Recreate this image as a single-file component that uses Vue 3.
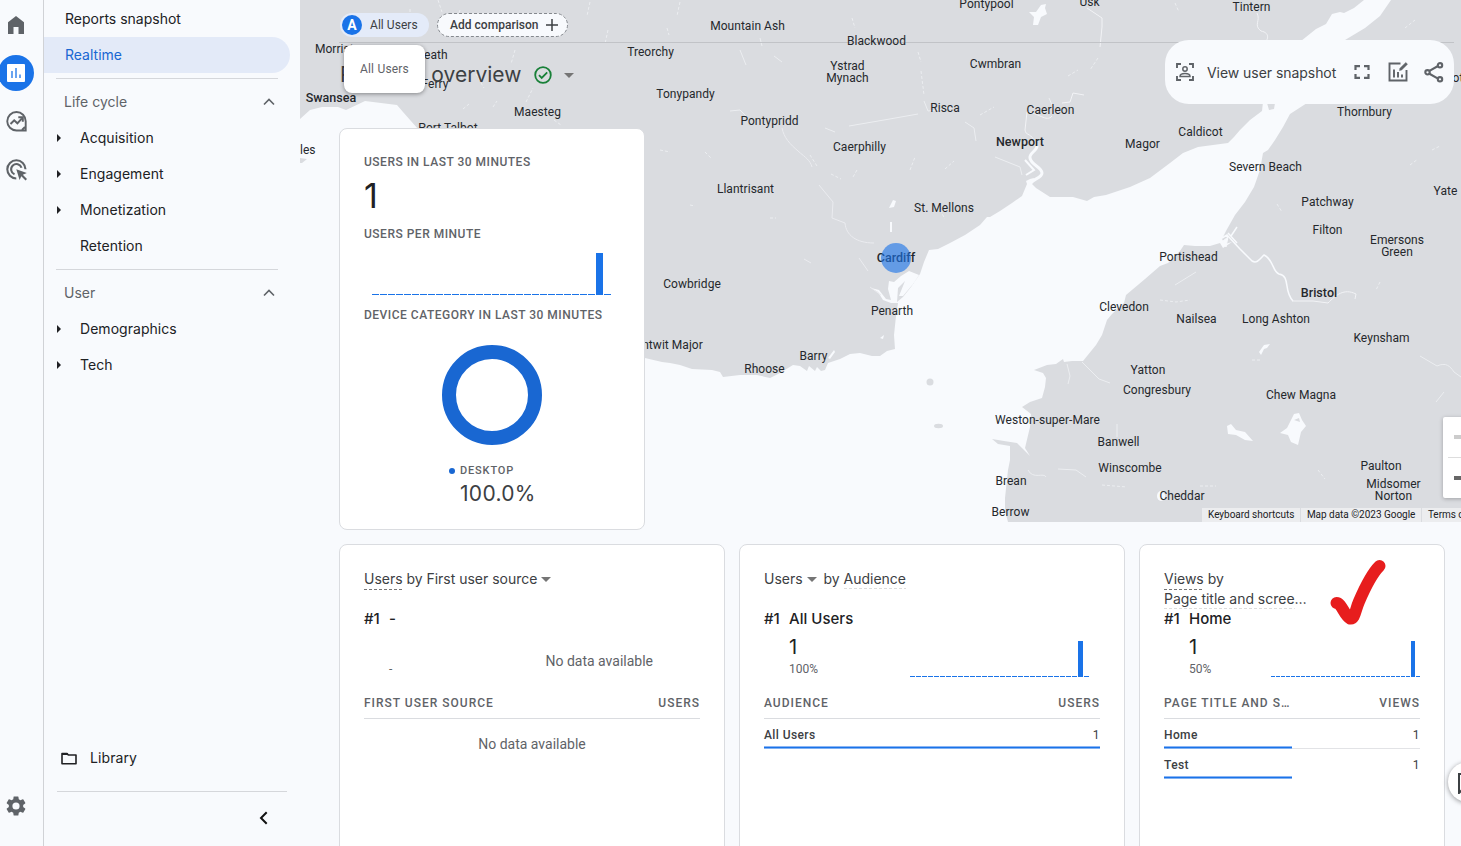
<script setup>
const labels = [
  ['Pontypool', 986, 8], ['Usk', 1089, 6], ['Tintern', 1251, 11], ['Mountain Ash', 747, 30], ['Treorchy', 650, 56],
  ['Blackwood', 876, 45], ['Ystrad', 847, 70], ['Mynach', 847, 82], ['Cwmbran', 995, 68], ['Tonypandy', 685, 98],
  ['Risca', 944.5, 112], ['Caerleon', 1050, 114], ['Pontypridd', 769, 125], ['Caerphilly', 859, 151], ['Maesteg', 537, 116],
  ['Port Talbot', 447.5, 132], ['Llantrisant', 745, 193], ['St. Mellons', 943.5, 212], ['Magor', 1142, 148],
  ['Caldicot', 1200, 136], ['Severn Beach', 1265, 171], ['Thornbury', 1364, 116], ['Yate', 1445, 195], ['Patchway', 1327, 206],
  ['Filton', 1327, 234], ['Emersons', 1396.5, 244], ['Green', 1396.5, 256], ['Portishead', 1188, 261], ['Clevedon', 1123.5, 311],
  ['Nailsea', 1196, 323], ['Long Ashton', 1275.5, 323], ['Keynsham', 1381, 342], ['Yatton', 1147.5, 374],
  ['Congresbury', 1156.5, 394], ['Chew Magna', 1300.5, 399], ['Weston-super-Mare', 1047, 424], ['Banwell', 1118, 446],
  ['Winscombe', 1129.5, 472], ['Cheddar', 1181.5, 500], ['Brean', 1010.5, 485], ['Berrow', 1010, 516], ['Paulton', 1380.5, 470],
  ['Midsomer', 1393, 488], ['Norton', 1393, 500], ['Cowbridge', 691.5, 288], ['Penarth', 891.5, 315], ['Barry', 813, 360],
  ['Rhoose', 764, 373], ['Llantwit Major', 664, 349], ['Morriston', 340.5, 53], ['Neath', 431, 59], ['Briton Ferry', 417, 88],
  ['Mumbles', 290, 154], ['Wotton', 1461, 82]
]
const cities = [['Swansea', 331, 101.5], ['Newport', 1020, 145.5], ['Cardiff', 896, 262], ['Bristol', 1319, 297]]
const ticks = Array.from({ length: 30 }, (_, i) => i)
const lifecycle = ['Acquisition', 'Engagement', 'Monetization', 'Retention']
const user = ['Demographics', 'Tech']
</script>

<template>
  <div class="app">
    <nav class="rail">
      <svg class="home" width="16" height="18" viewBox="0 0 16 18"><path d="M0 6.2 8 0l8 6.2V18h-5.5v-7h-5v7H0z" /></svg>
      <div class="active">
        <svg width="18" height="18" viewBox="0 0 18 18"><rect width="18" height="18" rx="1" fill="#fff" /><path d="M5 7v7M9 4v10M13 10.500v3.500" stroke="#1a73e8" stroke-width="1.300" /></svg>
      </div>
      <svg class="explore" width="21" height="21" viewBox="0 0 21 21" fill="none" stroke="#5f6368" stroke-width="1.900"><path d="M10.500 1a9.200 9.200 0 1 0 0 18.500H19.700V10.300A9.200 9.200 0 0 0 10.500 1z" /><path d="m4.500 13 3.700-3.700 3.200 3 4.500-5" stroke-width="2" /><path d="M12.300 6.300h4.500v4.500M16 19l3-3" stroke-width="2" /></svg>
      <svg class="ads" width="22" height="22" viewBox="0 0 22 22" fill="none" stroke="#5f6368" stroke-width="2.100"><path d="M10.300 19.500a9.100 9.100 0 1 1 9.200-9.200M8.500 15.300a5.300 5.300 0 1 1 7-6.500" /><path d="m10.300 10.300 10.500 3.800-4 1.700 4.200 4.200-1.500 1.500-4.200-4.200-1.700 3.700z" fill="#5f6368" stroke="none" /></svg>
      <svg class="gear" width="24" height="24" viewBox="0 0 24 24"><path d="M19.140 12.940c.040-.3.060-.610.060-.940s-.020-.640-.070-.940l2.030-1.580a.49.490 0 0 0 .120-.610l-1.920-3.320a.488.488 0 0 0-.590-.220l-2.390.960c-.5-.380-1.030-.7-1.620-.940l-.360-2.540a.484.484 0 0 0-.480-.410h-3.840c-.240 0-.430.170-.470.410l-.360 2.540c-.590.240-1.130.570-1.620.940l-2.390-.960c-.220-.080-.470 0-.590.220L2.740 8.870c-.120.210-.080.470.120.610l2.030 1.580c-.050.3-.090.630-.090.940s.020.640.070.940l-2.030 1.580a.49.490 0 0 0-.120.610l1.920 3.320c.120.220.370.290.590.220l2.390-.960c.5.380 1.030.7 1.620.940l.360 2.540c.050.240.240.410.480.410h3.840c.240 0 .440-.170.470-.410l.360-2.540c.590-.240 1.130-.560 1.620-.940l2.390.960c.220.080.470 0 .590-.220l1.920-3.320a.49.490 0 0 0-.120-.610zM12 15.600a3.600 3.600 0 1 1 0-7.200 3.600 3.600 0 0 1 0 7.200z" /></svg>
    </nav>

    <aside class="side">
      <a class="top-link">Reports snapshot</a>
      <a class="top-link selected">Realtime</a>
      <hr>
      <div class="group first"><span>Life cycle</span><svg width="12" height="8" viewBox="0 0 12 8"><path d="m1 6.500 5-5 5 5" fill="none" stroke="#5f6368" stroke-width="1.600" /></svg></div>
      <a v-for="item in lifecycle" :key="item" class="item"><i v-if="item !== 'Retention'" /><span>{{ item }}</span></a>
      <hr>
      <div class="group"><span>User</span><svg width="12" height="8" viewBox="0 0 12 8"><path d="m1 6.500 5-5 5 5" fill="none" stroke="#5f6368" stroke-width="1.600" /></svg></div>
      <a v-for="item in user" :key="item" class="item"><i /><span>{{ item }}</span></a>
      <div class="bottom">
        <a class="library"><svg width="16" height="13" viewBox="0 0 16 13"><path d="M1 11V1.500h5l1.300 1.500H15v8.800H1z" fill="none" stroke="#202124" stroke-width="1.600" stroke-linejoin="round" /><path d="M1 1h5.300l1.200 2H1z" fill="#202124" /></svg><span>Library</span></a>
        <div class="collapse"><svg width="9" height="14" viewBox="0 0 9 14"><path d="M7.700 1.200 2 7l5.700 5.800" fill="none" stroke="#111" stroke-width="2" /></svg></div>
      </div>
    </aside>

    <main>
      <svg class="map" width="1161" height="522" viewBox="300 0 1161 522">
        <rect x="300" width="1161" height="522" fill="#dadce0" />
        <path fill="#f8fafd" d="M300 119 310 110 322 107 338 107 346 110 365 101 397 105 403 112 418 129 500 280 645 358 662 362 670 363 680 365 692 369 712 370 720 372 723 377 740 375 757 375 770 378 780 373 793 365 800 366 807 371 809 366 815 371 817 367 821 371 825 370 828 363 840 359 850 354 860 353 872 356 880 356 887 351 895 349 894 335 896 316 898 303 891 303 883 300 878 292 871 288 879 290 886 299 891 300 888 289 889 281 894 282 901 276 909 271 919 275 913 284 903 296 899 296 905 281 898 288 897 302 903 297 911 287 920 274 924 262 929 250 938 249 950 243 965 235 980 225 987 217 990 217 1000 211 1012 203 1022 196 1027 184 1026 181 1030 179 1034 178 1032 184 1036 188 1050 197 1073 197 1087 201 1094 197 1106 195 1130 187 1150 178 1170 163 1183 153 1198 147 1228 143 1234 137 1240 130 1250 120 1262 111 1263 102 1301 41 1316 29 1326 24 1332 14 1340 12 1344 13 1354 8 1364 0 1391 0 1380 16 1365 28 1345 40 1307 103 1290 114 1283 127 1275 140 1268 150 1263 153 1260 170 1254 187 1245 202 1235 215 1226 231 1222 239 1225 244 1232 242 1223 248 1220 243 1210 246 1195 246 1184 245 1180 251 1168 263 1160 266 1145 279 1126 295 1124 303 1112 314 1107 320 1105 326 1102 335 1096 345 1083 361 1072 361 1064 362 1063 359 1056 364 1047 365 1034 370 1043 373 1046 378 1045 387 1042 398 1030 402 1022 407 1031 414 1030 427 1025 448 1030 456 1022 448 1017 443 1004 441 992 439 998 444 1010 446 1010 460 1008 470 1005 498 1005 511 1008 522 300 522z" />
        <g fill="#f8fafd"><path d="m1029 12 7 0 5-7 5-1-1 4 2 6-6 3-3 8h-5l1-8z" /><path d="m1294 414 5-1 3 7 4 6-5 6-3 13-7-3-3-7-8-2 7-5z" /><path d="m1227 426 4-2 5 6 9 2 8 9-8-1-9-5-8-1z" /><path d="m1259 352 5-7 6-1-3 4-3 1-3 6z" /><path d="m889 208 4-8 3 1-2 6zM890 222h2v10h-2zM880 338l4-3-1 4zM828 358l6-8 1 2-5 7z" /><ellipse cx="1161" cy="496" rx="4" ry="5" /></g>
        <g fill="#dadce0"><ellipse cx="930" cy="382" rx="3.500" ry="3.500" /><ellipse cx="938.500" cy="426" rx="4.500" ry="2.200" /><path d="m300 158 7 1-5 4h-2zM1267 103l8 0-1 6-5 1zM1294 420l5-2 1 4z" /></g>
        <g fill="none" stroke="#f8fafd"><path d="M1037 146c0 5-8 7-7 12 1 7 12 9 12 15 0 5-9 6-11 10" stroke-width="3" /><path d="m1025 160 9 10-8 5" stroke-width="2" /><path d="m1222 238 5-3 13 14 12 12c5 3 8-2 12-6 10 5 8 16 15 19 12 2 4 17 14 27" stroke-width="1.500" /><path d="m1231 236 6-9M1228 233l9 10" stroke-width="1.500" /><path d="m1223 241 5-4-2 10z" fill="#f8fafd" /></g>
        <g fill="none" stroke="#f2f3f6" stroke-width="1"><path d="M1036 145l-2-5c-5-8-8-4-9-10l2-18c10 0 20 11 25 4M1062 103l8-1 3-9 11 2M1087 8l15 10v9l-2 20" /><path d="M1257 13c4 8-4 12 4 18 10 2 7 10 2 13M1292 301l21 0 15 2c8-8 16-15 28-9l-1 5" /><path d="M782 128c2 10 8 16 16 23 8 7 12 9 14 16M819 185l14 17-1 16 13 5c1 12 11 20 29 20M859 258l9 13M804 259l7 4M870 287l11 8" stroke="#ebecf0" /></g>
        <g fill="none" stroke="#eceef1" stroke-width="1"><path d="m1082 362 17 17 11 4M1067 364l3 12-2 8M1117 424v13M1058 469l18 1 10 7M1028 470c5 10 16 2 18 7M1420 356l17 10c9-4 13 0 17 6l7 5M1436 402l8-10M1175 285l21-13M995 157l25 10 2 8M924 101l4 10 24-3M730 111l10-1 6 6M825 128l10 4M965 122l9 6 2 13M849 126l35-6 34-6M760 38l2 8M740 50l6 15M774 56l8 6M1049 98l3 7" /><path d="M410 9v20M438 0l4 12M460 10l-4 12M474 25l3 10M515 50l-4 14M476 74l8 14M526 102l7-14M554 120l7 5M463 109l6-5M493 107l4-6M590 2l-3 14M608 30l-3 14M680 2l-3 14M667 28l2 7M852 18l3 10M918 52l3 10M921 71l3 24M1098 58l-8 12M1068 76l10-6M1175 3l4 9M1405 28l10-8M1432 150l8-4M1380 282l-4 8M1252 360l8 0M1200 486h16M1102 485l25 2M1160 300l16 2 14-2M1410 165l8-6M1318 470l7 9M940 210l5 9M910 170l5-13M945 169l9-8M980 115l14-8M660 150l10 2M705 152l6 6M810 155l7 11M831 174l10 5M857 170l-4 7M690 205l5 1M770 218h6M1277 204l5 8" stroke-dasharray="3 2" /></g>
        <path d="M339 42.500H1454" stroke="#c1c3c7" />
        <g class="towns" transform="translate(.5 0)"><text v-for="l in labels" :key="l[0]" :x="l[1]" :y="l[2]">{{ l[0] }}</text></g>
        <g class="cities"><text v-for="l in cities" :key="l[0]" :x="l[1]" :y="l[2]">{{ l[0] }}</text></g>
        <circle cx="896" cy="258" r="15" fill="#1a73e8" fill-opacity=".62" />
      </svg>

      <div class="attribution"><span>Keyboard shortcuts</span><span>Map data ©2023 Google</span><span>Terms of Use</span></div>
      <div class="zoom"><b /><hr><b class="dark" /></div>

      <div class="chips">
        <div class="chip"><b>A</b><span>All Users</span></div>
        <div class="chip add"><svg class="outline" width="131" height="24"><rect x=".5" y=".5" width="130" height="23" rx="11.500" fill="#f8fafd" stroke="#85898e" stroke-dasharray="3 2" /></svg><span>Add comparison</span><svg width="12" height="12" viewBox="0 0 12 12"><path d="M6 0v12M0 6h12" stroke="#3c4043" stroke-width="1.500" /></svg></div>
      </div>

      <header>
        <h1><span>Realtime</span> overview</h1>
        <svg width="18" height="18" viewBox="0 0 18 18" fill="none" stroke="#188038" stroke-width="1.800"><circle cx="9" cy="9" r="7.800" /><path d="m5 9.200 2.700 2.700 5.500-5.500" /></svg>
        <i class="caret" />
      </header>
      <div class="tooltip">All Users</div>

      <div class="actions">
        <svg width="18" height="18" viewBox="0 0 18 18" fill="none" stroke="#5f6368" stroke-width="1.900"><path d="M1 5V1h4M13 1h4v4M17 13v4h-4M5 17H1v-4" /><circle cx="9" cy="6" r="2.200" stroke-width="1.500" /><path d="M4 13.500c0-4 10-4 10 0z" stroke-width="1.500" /></svg>
        <span>View user snapshot</span>
        <svg class="full" width="16" height="14" viewBox="0 0 16 14" fill="none" stroke="#5f6368" stroke-width="2.200"><path d="M1.500 5V1.200H6M10 1.200h4.500V5M14.500 9v3.800H10M6 12.800H1.500V9" /></svg>
        <svg class="edit" width="21" height="21" viewBox="0 0 21 21" fill="none" stroke="#5f6368" stroke-width="1.900"><path d="M12.500 2.500H1.500v17h17V9M6 8.500v8M10 11v5.500M14 13.500v3" /><path d="m11.500 9.500.5-2.300 5.800-5.700 1.700 1.700-5.800 5.700z" fill="#5f6368" stroke-width=".5" /></svg>
        <svg width="20" height="21" viewBox="0 0 20 21" fill="none" stroke="#5f6368" stroke-width="2.100"><path d="M5 9.200 14 4M5 11.500l9 5.200" /><circle cx="3.500" cy="10.300" r="2.200" /><circle cx="16" cy="3.300" r="2.200" /><circle cx="16" cy="17.300" r="2.200" /></svg>
      </div>

      <section class="card overview">
        <h2>USERS IN LAST 30 MINUTES</h2>
        <strong>1</strong>
        <h2 class="per">USERS PER MINUTE</h2>
        <div class="bars large"><i v-for="n in ticks" :key="n" :class="{ peak: n === 28 }" /></div>
        <h2>DEVICE CATEGORY IN LAST 30 MINUTES</h2>
        <div class="donut" />
        <div class="device"><i /><span>DESKTOP</span></div>
        <div class="percent">100.0%</div>
      </section>

      <div class="cards">
        <section class="card">
          <h3><span class="under">Users</span>&nbsp;by First user source<i class="caret" /></h3>
          <h4><span>#1</span>-</h4>
          <div class="metric empty"><small>-</small><span>No data available</span></div>
          <div class="table-head"><span>FIRST USER SOURCE</span><span>USERS</span></div>
          <p>No data available</p>
        </section>
        <section class="card">
          <h3>Users<i class="caret mid" />by&nbsp;<span class="under light">Audience</span></h3>
          <h4><span>#1</span>All Users</h4>
          <div class="metric"><div><b>1</b><small>100%</small></div><div class="bars audience"><i v-for="n in ticks" :key="n" :class="{ peak: n === 28 }" /></div></div>
          <div class="table-head"><span>AUDIENCE</span><span>USERS</span></div>
          <div class="row full-row"><span>All Users</span><em>1</em></div>
        </section>
        <section class="card narrow">
          <h3 class="two"><span><span class="under">Views</span> by</span><span><span class="under light">Page title and scree</span>…</span></h3>
          <h4><span>#1</span>Home</h4>
          <div class="metric"><div><b>1</b><small>50%</small></div><div class="bars views"><i v-for="n in ticks" :key="n" :class="{ peak: n === 28 }" /></div></div>
          <div class="table-head"><span>PAGE TITLE AND S…</span><span>VIEWS</span></div>
          <div class="row ruled"><span>Home</span><em>1</em></div>
          <div class="row"><span>Test</span><em>1</em></div>
          <svg class="check" width="60" height="70" viewBox="0 0 60 70"><path d="M7.500 44c5 0 8 13 13.500 15.500 5 1 5-8 9-17 6-14 12-27 20.500-35.500" fill="none" stroke="#e71d1d" stroke-width="12" stroke-linecap="round" stroke-linejoin="round" /></svg>
        </section>
      </div>
      <div class="feedback"><svg width="20" height="22" viewBox="0 0 20 22"><path d="M2 21V2h18v15H6z" fill="none" stroke="#3c4043" stroke-width="2" /></svg></div>
    </main>
  </div>
</template>

<style>
html, body { margin: 0; overflow: hidden; }
</style>

<style scoped>
* { box-sizing: border-box; }
.app { display: flex; width: 1461px; height: 846px; overflow: hidden; background: #f8fafd; color: #202124; font-family: Roboto, "Liberation Sans", sans-serif; }
.app svg { display: block; flex: none; }
.rail { width: 44px; flex: none; border-right: 1px solid #d0d2d6; display: flex; flex-direction: column; fill: #5f6368; }
.home { margin: 16px 0 0 8px; }
.active { width: 36px; height: 36px; margin: 21px 0 0 -2px; background: #1a73e8; border-radius: 50%; display: flex; align-items: center; justify-content: center; }
.explore { margin: 20px 0 0 6px; }
.ads { margin: 27px 0 0 6px; }
.gear { margin: auto 0 28px 4px; }
.side { width: 256px; flex: none; display: flex; flex-direction: column; font: 400 14px/36px Inter, sans-serif; padding-top: 1px; }
.top-link { height: 36px; padding-left: 21px; }
.selected { width: 246px; background: #e3eaf8; color: #1967d2; border-radius: 0 18px 18px 0; }
.side hr { width: 222px; height: 1px; border: 0; background: #d5d7db; margin: 5px 0 5px 12px; }
.group { height: 36px; display: flex; align-items: center; justify-content: space-between; padding: 0 25px 0 20px; color: #5f6368; }
.item { height: 36px; display: flex; align-items: center; letter-spacing: .04px; }
.item i { width: 0; height: 0; border: 4px solid transparent; border-left: 4px solid #202124; border-right: 0; margin-left: 13px; }
.item span { margin-left: 19px; }
.item span:first-child { margin-left: 36px; }
.bottom { margin-top: auto; }
.library { display: flex; align-items: center; margin-left: 17px; gap: 13px; height: 36px; margin-bottom: 15px; letter-spacing: .1px; }
.collapse { height: 55px; border-top: 1px solid #d5d7db; margin-left: 13px; width: 230px; padding: 19px 0 0 202px; }
main { position: relative; flex: 1; min-width: 0; overflow: hidden; display: flex; flex-direction: column; }
.map { position: absolute; left: 0; top: 0; }
.map text { text-anchor: middle; fill: #25282c; font-family: Roboto, sans-serif; font-size: 12px; letter-spacing: .04px; }
.map .cities text { font-weight: 500; font-size: 12.500px; }
.chips { position: relative; flex: none; display: flex; gap: 8px; padding: 13px 0 0 40px; height: 37px; }
.chip { display: flex; align-items: center; width: 89px; height: 24px; border-radius: 12px; background: #e4ebf9; font-size: 12px; color: #3c4043; padding-left: 2px; gap: 8px; letter-spacing: .05px; }
.chip b { width: 20px; height: 20px; border-radius: 50%; background: #1a73e8; color: #fff; display: grid; place-items: center; font-size: 14px; }
.add { position: relative; width: 131px; padding-left: 13px; background: none; font-weight: 500; letter-spacing: .02px; }
.outline { position: absolute; left: 0; top: 0; }
.add span, .add svg:last-child { position: relative; }
header { position: relative; flex: none; display: flex; align-items: center; height: 38px; margin-top: 19px; margin-bottom: 34px; padding: 0 0 0 40px; }
h1, h2, h3, h4, p { margin: 0; font-weight: 400; }
h1 { width: 182px; font: 400 21px/28px Inter, sans-serif; color: #3c4043; white-space: nowrap; }
header svg { margin-left: 12px; }
.caret { display: inline-block; width: 0; height: 0; border: 5px solid transparent; border-top-color: #757575; border-bottom: 0; }
header .caret { margin-left: 12px; }
.tooltip { position: absolute; left: 44px; top: 45px; width: 81px; height: 48px; border-radius: 8px; background: #fff; color: #5f6368; box-shadow: 0 1px 4px #0006; font-size: 12px; line-height: 48px; text-align: center; letter-spacing: .2px; }
.actions { position: absolute; left: 865px; top: 40px; width: 289px; height: 64px; background: #f8fafd; border-radius: 24px; display: flex; align-items: center; padding-left: 11px; font: 400 14px Inter, sans-serif; color: #3c4043; }
.actions span { margin-left: 13px; width: 129px; letter-spacing: -.05px; white-space: nowrap; }
.full { margin-left: 18px; }
.edit { margin: 0 15px 2px 18px; }
.attribution { position: absolute; right: 0; top: 508px; width: 259px; height: 14px; overflow: hidden; display: flex; gap: 1px; font-size: 10px; line-height: 14px; white-space: nowrap; color: #202124; }
.attribution span { background: #ecedef; padding: 0 5.500px 0 6px; letter-spacing: -.02px; }
.zoom { position: absolute; left: 1143px; top: 417px; width: 40px; height: 81px; background: #fff; border-radius: 2px; box-shadow: 0 1px 4px #0004; padding: 18px 5px; }
.zoom b { display: block; width: 14px; height: 4px; background: #ccc; margin-left: 6px; }
.zoom hr { margin: 18px 0; border: 0; height: 1px; background: #ddd; }
.zoom .dark { background: #666; }
.card { position: relative; background: #fff; border: 1px solid #dadce0; border-radius: 8px; padding: 24px; }
.overview { width: 306px; height: 402px; margin-left: 39px; flex: none; }
h2 { font: 500 12px/19px Roboto, sans-serif; height: 18px; color: #5f6368; letter-spacing: .5px; white-space: nowrap; }
.overview strong { display: block; font: 400 34px/36px Inter, sans-serif; margin-top: 7px; height: 47px; }
.bars { display: flex; align-items: flex-end; }
.bars i { flex: 1; height: 1px; background: #1a73e8; margin-right: 1px; }
.large { margin: 9px 0 11px 8px; width: 240px; height: 43px; }
.large .peak { height: 42px; }
.donut { width: 100px; height: 100px; border-radius: 50%; border: 14px solid #1967d2; margin: 21px 0 0 78px; }
.device { display: flex; align-items: center; margin: 17px 0 0 85px; height: 18px; gap: 5px; font: 500 11px/18px Roboto; color: #5f6368; letter-spacing: .85px; }
.device i { width: 6px; height: 6px; border-radius: 50%; background: #1967d2; }
.percent { font: 400 21px/28px Inter, sans-serif; margin-left: 96px; letter-spacing: .3px; color: #3c4043; }
.cards { display: flex; gap: 14px; padding-left: 39px; margin-top: 14px; flex: none; }
.cards .card { width: 386px; height: 320px; }
.cards .narrow { width: 306px; }
h3 { height: 38px; display: flex; align-items: flex-start; font: 400 14px/20px Inter, sans-serif; color: #3c4043; letter-spacing: -.02px; white-space: nowrap; }
h3 .caret { margin: 8px 0 0 4px; }
h3 .mid { margin-right: 7px; }
.under { background: repeating-linear-gradient(90deg, #777 0 3px, transparent 3px 5px) bottom / 100% 1px no-repeat; display: inline-block; height: 21px; }
.light { background: repeating-linear-gradient(90deg, #ddd 0 3px, transparent 3px 5px) bottom / 100% 1px no-repeat; height: 20px; }
.two { flex-direction: column; }
.two > span { height: 20px; }
h4 { height: 24px; font: 450 15px/24px Inter, sans-serif; letter-spacing: .02px; display: flex; }
h4 span { width: 25px; }
.metric { display: flex; justify-content: space-between; height: 59px; }
.metric > div:first-child { padding-left: 25px; display: flex; flex-direction: column; }
.metric b { font: 400 20px/32px Inter, sans-serif; height: 32px; }
.metric small { font-size: 12px; line-height: 12px; color: #5f6368; }
.metric .bars { height: 46px; }
.audience { width: 180px; margin-right: 10px; }
.views { width: 150px; margin-right: -1px; }
.audience .peak, .views .peak { height: 36px; }
.empty { color: #5f6368; font-size: 14px; }
.empty small { margin: 32px 0 0 25px; }
.empty > span { margin: 22px 47px 0 0; }
.table-head { height: 29px; padding-top: 4px; border-bottom: 1px solid #dadce0; display: flex; justify-content: space-between; font: 500 12px/18px Roboto; color: #5f6368; letter-spacing: 1px; }
p { text-align: center; font-size: 14px; line-height: 20px; margin-top: 15px; color: #5f6368; }
.row { height: 30px; position: relative; display: flex; justify-content: space-between; font: 500 12px/32px Roboto; letter-spacing: .4px; color: #3c4043; }
.row::after { content: ""; position: absolute; left: 0; bottom: 0; width: 50%; height: 3px; background: linear-gradient(#8ab5f4 0 1px, #1a73e8 1px 2px, #80b0f3 2px); }
.full-row::after { width: 100%; }
.row em { font-style: normal; font-weight: 400; }
.ruled { box-shadow: inset 0 -1px #e2e3e6; }
.check { position: absolute; left: 189px; top: 14px; }
.feedback { position: absolute; left: 1148px; top: 762px; width: 40px; height: 40px; background: #fff; border-radius: 50%; box-shadow: 0 1px 5px #0006; padding: 10px 0 0 9px; }
</style>
